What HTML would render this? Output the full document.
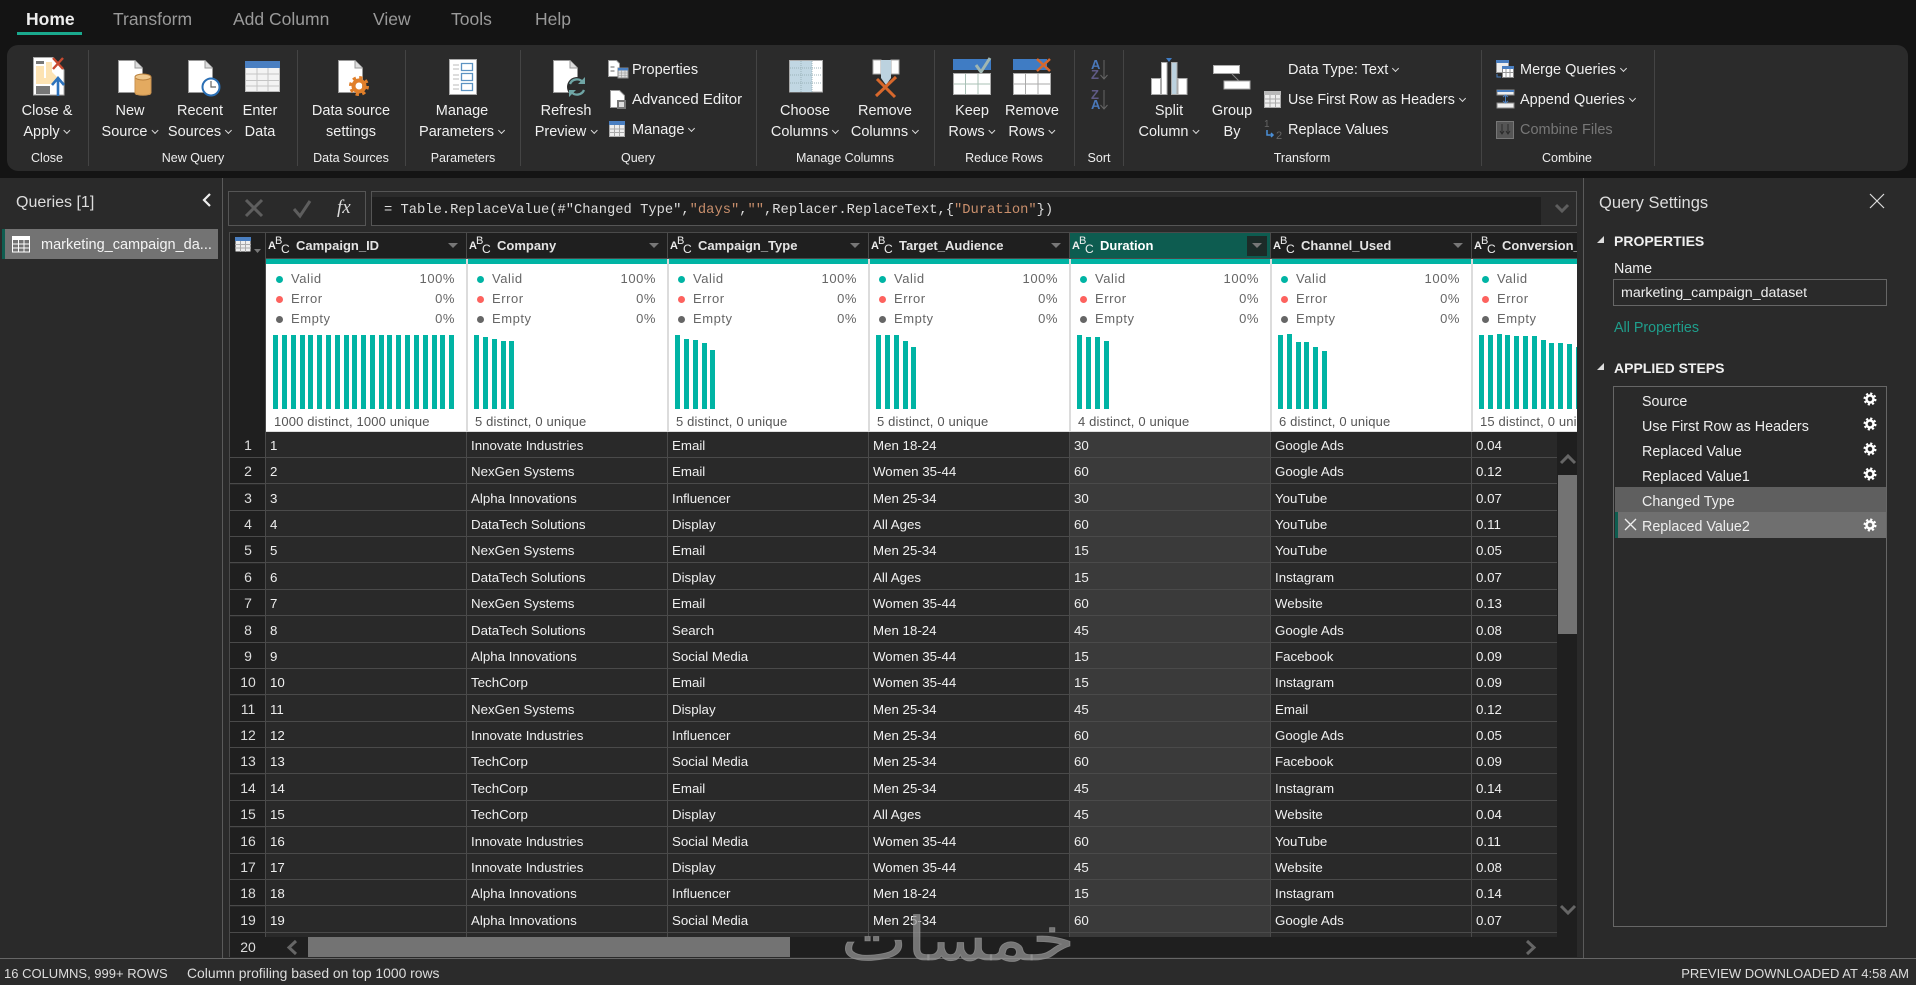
<!DOCTYPE html>
<html lang="en"><head><meta charset="utf-8"><title>Power Query Editor</title>
<style>
*{box-sizing:border-box;margin:0;padding:0}
html,body{width:1916px;height:985px;overflow:hidden;background:#2a2a2a}
body{position:relative;font-family:"Liberation Sans",Arial,sans-serif;color:#eee}
.a{position:absolute;white-space:nowrap}
.top{position:absolute;left:0;top:0;width:1916px;height:178px;background:#141414}
.tab{position:absolute;top:9px;font-size:17.5px;line-height:20px;color:#9a9a9a;white-space:nowrap}
.rib{position:absolute;left:7px;top:45px;width:1901px;height:126px;background:#2b2b2b;border-radius:11px}
.sep{position:absolute;top:50px;width:1px;height:116px;background:#444}
.l{position:absolute;transform:translateX(-50%);white-space:nowrap;font-size:14.5px;line-height:18px;color:#f0f0f0;margin-top:1px}
.g{position:absolute;transform:translateX(-50%);top:150px;white-space:nowrap;font-size:12.5px;line-height:15px;color:#eee;margin-top:1px}
.s{position:absolute;white-space:nowrap;font-size:14.5px;line-height:18px;color:#f0f0f0;margin-top:1px}
.v{display:inline-block;width:5px;height:5px;border:solid #ddd;border-width:0 1px 1px 0;transform:rotate(45deg);margin:0 1px 3px 5px}
.grid{position:absolute;left:0;top:0;width:1577px;height:957px;overflow:hidden}
.h{position:absolute;top:232px;height:27px;width:201px;background:#1f1f1f;border:solid #4a4a4a;border-width:1px 1px 1px 0}
.h b{position:absolute;left:30px;top:4px;font-size:13px;line-height:17px;color:#e4e4e4;white-space:nowrap}
.t{position:absolute;left:2px;top:7px;font-size:11px;line-height:13px;font-weight:bold;color:#eee;width:24px;height:18px}
.t u,.t s{position:absolute;text-decoration:none;font-weight:normal}
.t u{left:7px;top:-5px}.t s{left:13px;top:3px;font-size:12px}
.h i{position:absolute;left:182px;top:10px;width:0;height:0;border:solid transparent;border-width:5px 5px 0;border-top-color:#777}
.r{position:absolute;left:229px;width:1328px;height:26px;border-bottom:1px solid #4a4a4a;font-size:13.3px;line-height:27px;color:#f0f0f0}
.r b{position:absolute;left:0;top:0;width:37px;height:25px;background:#1f1f1f;font-weight:normal;text-align:center;font-size:14px;color:#ddd;padding-left:1px}
.r i{position:absolute;top:0;font-style:normal;white-space:nowrap}
.r i:nth-of-type(1){left:41px}.r i:nth-of-type(2){left:242px}.r i:nth-of-type(3){left:443px}.r i:nth-of-type(4){left:644px}.r i:nth-of-type(5){left:845px}.r i:nth-of-type(6){left:1046px}.r i:nth-of-type(7){left:1247px}
.p{position:absolute;top:264px;width:201px;height:167px;font-size:13px;line-height:16px;color:#666;letter-spacing:.55px}
.p span{position:absolute;white-space:nowrap}
.p em{position:absolute;left:10px;width:7px;height:7px;border-radius:50%}
.f{color:#555;letter-spacing:.15px;left:8px;top:150px}
.st{position:absolute;left:1642px;white-space:nowrap;font-size:14.3px;line-height:18px;color:#eee}
</style></head><body>

<div class="top"></div>
<div class="tab" style="left:26px;color:#eee;font-weight:bold">Home</div>
<div class="a" style="left:17px;top:32px;width:65px;height:3px;background:#1aa98e"></div>
<div class="tab" style="left:113px">Transform</div>
<div class="tab" style="left:233px">Add Column</div>
<div class="tab" style="left:373px">View</div>
<div class="tab" style="left:451px">Tools</div>
<div class="tab" style="left:535px">Help</div>

<div class="rib"></div>
<div class="sep" style="left:88px"></div><div class="sep" style="left:297px"></div><div class="sep" style="left:405px"></div><div class="sep" style="left:520px"></div><div class="sep" style="left:756px"></div><div class="sep" style="left:934px"></div><div class="sep" style="left:1074px"></div><div class="sep" style="left:1123px"></div><div class="sep" style="left:1481px"></div><div class="sep" style="left:1654px"></div>

<div class="l" style="left:47px;top:101px">Close &amp;</div><div class="l" style="left:47px;top:122px">Apply<span class="v"></span></div>
<div class="l" style="left:130px;top:101px">New</div><div class="l" style="left:130px;top:122px">Source<span class="v"></span></div>
<div class="l" style="left:200px;top:101px">Recent</div><div class="l" style="left:200px;top:122px">Sources<span class="v"></span></div>
<div class="l" style="left:260px;top:101px">Enter</div><div class="l" style="left:260px;top:122px">Data</div>
<div class="l" style="left:351px;top:101px">Data source</div><div class="l" style="left:351px;top:122px">settings</div>
<div class="l" style="left:462px;top:101px">Manage</div><div class="l" style="left:462px;top:122px">Parameters<span class="v"></span></div>
<div class="l" style="left:566px;top:101px">Refresh</div><div class="l" style="left:566px;top:122px">Preview<span class="v"></span></div>
<div class="l" style="left:805px;top:101px">Choose</div><div class="l" style="left:805px;top:122px">Columns<span class="v"></span></div>
<div class="l" style="left:885px;top:101px">Remove</div><div class="l" style="left:885px;top:122px">Columns<span class="v"></span></div>
<div class="l" style="left:972px;top:101px">Keep</div><div class="l" style="left:972px;top:122px">Rows<span class="v"></span></div>
<div class="l" style="left:1032px;top:101px">Remove</div><div class="l" style="left:1032px;top:122px">Rows<span class="v"></span></div>
<div class="l" style="left:1169px;top:101px">Split</div><div class="l" style="left:1169px;top:122px">Column<span class="v"></span></div>
<div class="l" style="left:1232px;top:101px">Group</div><div class="l" style="left:1232px;top:122px">By</div>

<div class="s" style="left:632px;top:60px">Properties</div>
<div class="s" style="left:632px;top:90px;font-size:15px">Advanced Editor</div>
<div class="s" style="left:632px;top:120px">Manage<span class="v"></span></div>
<div class="s" style="left:1288px;top:60px">Data Type: Text<span class="v"></span></div>
<div class="s" style="left:1288px;top:90px;font-size:14.3px">Use First Row as Headers<span class="v"></span></div>
<div class="s" style="left:1288px;top:120px">Replace Values</div>
<div class="s" style="left:1520px;top:60px">Merge Queries<span class="v"></span></div>
<div class="s" style="left:1520px;top:90px">Append Queries<span class="v"></span></div>
<div class="s" style="left:1520px;top:120px;color:#777">Combine Files</div>

<div class="g" style="left:47px">Close</div><div class="g" style="left:193px">New Query</div><div class="g" style="left:351px">Data Sources</div><div class="g" style="left:463px">Parameters</div><div class="g" style="left:638px">Query</div><div class="g" style="left:845px">Manage Columns</div><div class="g" style="left:1004px">Reduce Rows</div><div class="g" style="left:1099px">Sort</div><div class="g" style="left:1302px">Transform</div><div class="g" style="left:1567px">Combine</div>

<!-- ribbon icons -->
<svg class="a" style="left:0;top:0" width="1916" height="178" viewBox="0 0 1916 178">
<defs>
<symbol id="doc" viewBox="0 0 25 33" overflow="visible"><path d="M.5.5H17L24.5 8v24.5H.5z" fill="#fff" stroke="#999"/><path d="M17 .5V8h7.5" fill="#ddd" stroke="#999"/></symbol>
</defs>
<!-- close apply -->
<path d="M33.5 57.5H53L64 70v25H33.5z" fill="#fff" stroke="#aaa"/>
<rect x="36" y="61" width="8" height="3" fill="#777"/><path d="M36 66h8v12h9v6H36z" fill="#fde3b3"/><path d="M46 62h6v10l6 6-5 5h-7z" fill="#fde3b3"/>
<rect x="36" y="86" width="14" height="8" fill="#777"/>
<path d="M53 58l10 11M63 58L53 69" stroke="#c94a30" stroke-width="2.4" fill="none"/>
<path d="M52 85l6-7 6 7M58 79v17" stroke="#2d73bd" stroke-width="2.6" fill="none"/>
<!-- new source -->
<use href="#doc" x="118" y="60" width="25" height="33"/>
<rect x="135" y="77" width="16" height="18" rx="2" fill="#e3aa60"/><ellipse cx="143" cy="77" rx="8" ry="3" fill="#efc88e" stroke="#b9803c"/><path d="M135 77v16c2 3 14 3 16 0V77" fill="none" stroke="#c89250"/>
<!-- recent -->
<use href="#doc" x="188" y="60" width="25" height="33"/>
<circle cx="211" cy="87" r="8.5" fill="#fff" stroke="#2a6fb5" stroke-width="2"/><path d="M211 81v6h5" fill="none" stroke="#666" stroke-width="1.2"/>
<!-- enter data -->
<rect x="245.5" y="61.5" width="34" height="30" fill="#f3f3f3" stroke="#bbb"/><rect x="245" y="61" width="35" height="7" fill="#4a7fc1"/>
<path d="M257 68v23M268 68v23M246 74h33M246 80.500h33M246 86h33" stroke="#c5c5c5" fill="none"/>
<!-- data source -->
<use href="#doc" x="338" y="60" width="25" height="33"/>
<circle cx="359" cy="86" r="5.500" fill="none" stroke="#e07f2a" stroke-width="4"/><circle cx="359" cy="86" r="8.500" fill="none" stroke="#e07f2a" stroke-width="3" stroke-dasharray="3.300 3.370"/>
<!-- manage params -->
<rect x="449.500" y="59.500" width="27" height="35" fill="#fff" stroke="#aaa"/>
<path d="M453 65h6M453 69h6M453 75h6M453 79h6M453 85h6M453 89h6" stroke="#bbb" fill="none"/>
<path d="M461.500 63.500h11v7h-11zM461.500 73.500h11v7h-11zM461.500 83.500h11v7h-11z" fill="#fff" stroke="#5c93c2" stroke-width="1.300"/>
<!-- refresh -->
<use href="#doc" x="553" y="60" width="25" height="33"/>
<circle cx="577" cy="87" r="10" fill="#2b2b2b"/>
<path d="M570 84a7.500 7.500 0 0 1 13-1.500M584 90a7.500 7.500 0 0 1-13 1.500" fill="none" stroke="#6fa5a5" stroke-width="2.300"/><path d="M585 77v7h-7zM569 97v-7h7z" fill="#6fa5a5"/>
<!-- properties -->
<path d="M608.500 60.500h8l3 3v13h-11z" fill="#fff" stroke="#999"/><rect x="618" y="68" width="10" height="10" fill="#ddd" stroke="#888"/><rect x="618" y="68" width="10" height="2.500" fill="#4a7fc1"/><path d="M621.500 70v8M625 70v8M618 73h10M618 75.500h10" stroke="#999" stroke-width=".6"/><path d="M610.500 67h4M610.500 71h4" stroke="#666"/>
<!-- adv editor -->
<path d="M610.500 90.500h9l5 5v12h-14z" fill="#fff" stroke="#999"/><rect x="617" y="100" width="9" height="9" fill="#777"/><rect x="619" y="102" width="5" height="5" fill="#ddd"/>
<!-- manage -->
<rect x="609.500" y="121.500" width="15" height="15" fill="#eee" stroke="#aaa"/><rect x="609" y="121" width="16" height="4" fill="#4a7fc1"/><path d="M614.500 125v11M619.500 125v11M610 129h14M610 132.500h14" stroke="#aaa" fill="none"/>
<!-- choose columns -->
<rect x="789.500" y="60.500" width="33" height="31.500" fill="#fff" stroke="#aaa"/><rect x="790" y="61" width="22" height="31" fill="#c1d7e3"/>
<path d="M790 68h32M790 75h32M790 83h32M801 61v31M812 61v31" stroke="#9cb3b9" stroke-dasharray="1 1" fill="none"/>
<!-- remove columns -->
<rect x="873" y="60" width="8" height="14" fill="#fff" stroke="#aaa"/><rect x="891" y="60" width="8" height="14" fill="#fff" stroke="#aaa"/><path d="M881 60h10v18l-5 7-5-7z" fill="#bcd2df"/>
<path d="M876 96l20-19M877 79l18 18" stroke="#d8682c" stroke-width="3" fill="none"/>
<!-- keep rows -->
<rect x="953" y="59" width="38" height="11" fill="#3f7cc4"/><path d="M976 65l5 7 9-14" fill="none" stroke="#9fb6b2" stroke-width="3"/>
<rect x="953.500" y="73.500" width="37" height="21" fill="#fff" stroke="#aaa"/><path d="M965.500 74v20M978 74v20M954 84h36" stroke="#a8c0b6" fill="none"/>
<!-- remove rows -->
<rect x="1013" y="59" width="34" height="11" fill="#3f7cc4"/><path d="M1037 59l13 12M1050 59l-13 12" stroke="#d8682c" stroke-width="2.500" fill="none"/>
<rect x="1013.500" y="73.500" width="37" height="21" fill="#fff" stroke="#aaa"/><path d="M1025.500 74v20M1038 74v20M1014 84h36" stroke="#aaa" fill="none"/>
<!-- sort -->
<text x="1091" y="69" font-size="13" font-weight="bold" fill="#4a78b8" font-family="Liberation Sans">A</text><text x="1091" y="79" font-size="13" font-weight="bold" fill="#5f5a85" font-family="Liberation Sans">Z</text>
<path d="M1104 60v19M1100.500 75l3.500 4 3.500-4" stroke="#666" fill="none"/>
<text x="1091" y="99" font-size="13" font-weight="bold" fill="#5f5a85" font-family="Liberation Sans">Z</text><text x="1091" y="109" font-size="13" font-weight="bold" fill="#4a78b8" font-family="Liberation Sans">A</text>
<path d="M1104 90v19M1100.500 105l3.500 4 3.500-4" stroke="#666" fill="none"/>
<!-- split -->
<path d="M1166 58h6l-3 4z" fill="#3f7cc4"/><rect x="1151.500" y="78.500" width="9" height="16" fill="#fff" stroke="#aaa"/><rect x="1161.500" y="62.500" width="5.500" height="32" fill="#fff" stroke="#aaa"/><rect x="1171.500" y="62.500" width="5.500" height="32" fill="#bcd2df" stroke="#aaa"/><rect x="1178" y="78.500" width="9" height="16" fill="#fff" stroke="#aaa"/>
<!-- group -->
<rect x="1213.500" y="65.500" width="26" height="8" fill="#fff" stroke="#aaa"/><rect x="1224" y="81" width="26" height="8" fill="#fff" stroke="#aaa"/><path d="M1232 74l7 7" stroke="#888" fill="none"/>
<!-- first row -->
<rect x="1264.500" y="91.500" width="16" height="16" fill="#eee" stroke="#aaa"/><rect x="1264" y="91" width="17" height="4" fill="#b9b9b9"/><path d="M1270 95v12M1275.500 95v12M1265 99h15M1265 103h15" stroke="#aaa" fill="none"/>
<!-- replace -->
<text x="1264" y="127" font-size="10" fill="#666" font-family="Liberation Sans">1</text><text x="1276" y="139" font-size="11" fill="#666" font-family="Liberation Sans">2</text><path d="M1267 130v5h6M1271 133l2 2-2 2" stroke="#4a8fd8" stroke-width="1.500" fill="none"/>
<!-- merge -->
<rect x="1496.500" y="60.500" width="12" height="12" fill="#eee" stroke="#999"/><rect x="1496" y="60" width="13" height="3" fill="#4a7fc1"/><rect x="1502.500" y="66.500" width="11" height="11" fill="#fff" stroke="#888"/><rect x="1502" y="66" width="12" height="3" fill="#4a7fc1"/><path d="M1506 69v8M1510 69v8M1503 72.500h10" stroke="#999" fill="none"/><path d="M1497 74v3h4" stroke="#4a7fc1" fill="none"/>
<!-- append -->
<rect x="1497" y="90" width="17" height="5" fill="#eee" stroke="#888"/><rect x="1497" y="90" width="17" height="2" fill="#4a7fc1"/><rect x="1497" y="103" width="17" height="5" fill="#eee" stroke="#888"/><path d="M1505.500 95v8M1503 97l2.500-2 2.500 2M1503 101l2.500 2 2.500-2" stroke="#4a7fc1" fill="none"/>
<!-- combine -->
<rect x="1496.500" y="121.500" width="17" height="17" fill="#555" stroke="#777"/><path d="M1502 124v10M1500 131l2 3 2-3M1508 124v10M1506 131l2 3 2-3" stroke="#2b2b2b" fill="none"/>
</svg>

<!-- left panel -->
<div class="a" style="left:222px;top:178px;width:1px;height:780px;background:#5a5a5a"></div>
<div class="a" style="left:16px;top:193px;font-size:16px;line-height:20px;color:#ddd">Queries [1]</div>
<svg class="a" style="left:200px;top:192px" width="14" height="16"><path d="M10 2L4 8l6 6" fill="none" stroke="#eee" stroke-width="2.200"/></svg>
<div class="a" style="left:2px;top:229px;width:216px;height:30px;background:#737373;border-left:3px solid #0f5d50"></div>
<svg class="a" style="left:12px;top:236px" width="18" height="17"><path d="M.5.500h17v15.500H.5z" fill="none" stroke="#fff"/><rect width="18" height="4" fill="#fff"/><path d="M6.500 4v12M12 4v12M0 8h18M0 12h18" stroke="#fff" fill="none"/></svg>
<div class="a" style="left:41px;top:236px;font-size:14.500px;line-height:18px;color:#f4f4f4">marketing_campaign_da...</div>

<!-- formula bar -->
<div class="a" style="left:228px;top:191px;width:138px;height:35px;border:1px solid #555"></div>
<svg class="a" style="left:240px;top:195px" width="120" height="28"><path d="M6 5l16 16M22 5L6 21" stroke="#5e5e5e" stroke-width="3" fill="none"/><path d="M54 14l6 7 10-15" stroke="#5e5e5e" stroke-width="3" fill="none"/></svg>
<div class="a" style="left:337px;top:196px;font:italic 19px/24px 'Liberation Serif',serif;color:#ddd">fx</div>
<div class="a" style="left:371px;top:191px;width:1206px;height:35px;border:1px solid #555;background:#2b2b2b"></div>
<div class="a" style="left:372px;top:197px;width:1169px;height:28px;background:#1f1f1f"></div>
<div class="a" style="left:384px;top:201px;font:13.770px/19px 'Liberation Mono',monospace;color:#ddd">= Table.ReplaceValue(#"Changed Type",<span style="color:#c98f6c">"days"</span>,<span style="color:#c98f6c">""</span>,Replacer.ReplaceText,{<span style="color:#c98f6c">"Duration"</span>})</div>
<svg class="a" style="left:1554px;top:202px" width="16" height="14"><path d="M2 3l6 6 6-6" stroke="#5e5e5e" stroke-width="3" fill="none"/></svg>

<!-- grid -->
<div class="grid">
<div class="a" style="left:229px;top:232px;width:37px;height:200px;background:#1f1f1f;border:solid #4a4a4a;border-width:1px 1px 0 1px"></div>
<svg class="a" style="left:234px;top:236px" width="28" height="20"><rect x="1.500" y="1.500" width="15" height="14" fill="#eee"/><rect x="1" y="1" width="16" height="4" fill="#4a7fc1"/><path d="M6.500 5v11M11.500 5v11M1 8.500h16M1 12h16" stroke="#aaa" fill="none"/><path d="M20 13h7l-3.500 4z" fill="#777"/></svg>

<div class="h" style="left:266px"><span class="t">A<u>B</u><s>C</s></span><b>Campaign_ID</b><i></i></div>
<div class="h" style="left:467px"><span class="t">A<u>B</u><s>C</s></span><b>Company</b><i></i></div>
<div class="h" style="left:668px"><span class="t">A<u>B</u><s>C</s></span><b>Campaign_Type</b><i></i></div>
<div class="h" style="left:869px"><span class="t">A<u>B</u><s>C</s></span><b>Target_Audience</b><i></i></div>
<div class="h" style="left:1070px;background:#0d5c50"><span class="t">A<u>B</u><s>C</s></span><b style="color:#fff">Duration</b><span class="a" style="left:177px;top:3px;width:20px;height:20px;background:#1c2b28"></span><i></i></div>
<div class="h" style="left:1271px"><span class="t">A<u>B</u><s>C</s></span><b>Channel_Used</b><i></i></div>
<div class="h" style="left:1472px"><span class="t">A<u>B</u><s>C</s></span><b>Conversion_Rate</b></div>

<div class="a" style="left:266px;top:259px;width:1311px;height:5px;background:#00b4a4"></div>
<div class="a" style="left:266px;top:264px;width:1311px;height:168px;background:#fff;border-bottom:1px solid #ddd"></div>
<div class="a" style="left:465.500px;top:259px;width:2px;height:173px;background:#dcdcdc"></div>
<div class="a" style="left:666.500px;top:259px;width:2px;height:173px;background:#dcdcdc"></div>
<div class="a" style="left:867.500px;top:259px;width:2px;height:173px;background:#dcdcdc"></div>
<div class="a" style="left:1068.500px;top:259px;width:2px;height:173px;background:#dcdcdc"></div>
<div class="a" style="left:1269.500px;top:259px;width:2px;height:173px;background:#dcdcdc"></div>
<div class="a" style="left:1470.500px;top:259px;width:2px;height:173px;background:#dcdcdc"></div>

<div class="p" style="left:266px"><em style="top:12px;background:#00b4a4"></em><em style="top:32px;background:#fd625e"></em><em style="top:52px;background:#666"></em><span style="left:25px;top:7px">Valid</span><span style="left:25px;top:27px">Error</span><span style="left:25px;top:47px">Empty</span><span style="right:12px;top:7px">100%</span><span style="right:12px;top:27px">0%</span><span style="right:12px;top:47px">0%</span><span class="f">1000 distinct, 1000 unique</span></div>
<div class="p" style="left:467px"><em style="top:12px;background:#00b4a4"></em><em style="top:32px;background:#fd625e"></em><em style="top:52px;background:#666"></em><span style="left:25px;top:7px">Valid</span><span style="left:25px;top:27px">Error</span><span style="left:25px;top:47px">Empty</span><span style="right:12px;top:7px">100%</span><span style="right:12px;top:27px">0%</span><span style="right:12px;top:47px">0%</span><span class="f">5 distinct, 0 unique</span></div>
<div class="p" style="left:668px"><em style="top:12px;background:#00b4a4"></em><em style="top:32px;background:#fd625e"></em><em style="top:52px;background:#666"></em><span style="left:25px;top:7px">Valid</span><span style="left:25px;top:27px">Error</span><span style="left:25px;top:47px">Empty</span><span style="right:12px;top:7px">100%</span><span style="right:12px;top:27px">0%</span><span style="right:12px;top:47px">0%</span><span class="f">5 distinct, 0 unique</span></div>
<div class="p" style="left:869px"><em style="top:12px;background:#00b4a4"></em><em style="top:32px;background:#fd625e"></em><em style="top:52px;background:#666"></em><span style="left:25px;top:7px">Valid</span><span style="left:25px;top:27px">Error</span><span style="left:25px;top:47px">Empty</span><span style="right:12px;top:7px">100%</span><span style="right:12px;top:27px">0%</span><span style="right:12px;top:47px">0%</span><span class="f">5 distinct, 0 unique</span></div>
<div class="p" style="left:1070px"><em style="top:12px;background:#00b4a4"></em><em style="top:32px;background:#fd625e"></em><em style="top:52px;background:#666"></em><span style="left:25px;top:7px">Valid</span><span style="left:25px;top:27px">Error</span><span style="left:25px;top:47px">Empty</span><span style="right:12px;top:7px">100%</span><span style="right:12px;top:27px">0%</span><span style="right:12px;top:47px">0%</span><span class="f">4 distinct, 0 unique</span></div>
<div class="p" style="left:1271px"><em style="top:12px;background:#00b4a4"></em><em style="top:32px;background:#fd625e"></em><em style="top:52px;background:#666"></em><span style="left:25px;top:7px">Valid</span><span style="left:25px;top:27px">Error</span><span style="left:25px;top:47px">Empty</span><span style="right:12px;top:7px">100%</span><span style="right:12px;top:27px">0%</span><span style="right:12px;top:47px">0%</span><span class="f">6 distinct, 0 unique</span></div>
<div class="p" style="left:1472px"><em style="top:12px;background:#00b4a4"></em><em style="top:32px;background:#fd625e"></em><em style="top:52px;background:#666"></em><span style="left:25px;top:7px">Valid</span><span style="left:25px;top:27px">Error</span><span style="left:25px;top:47px">Empty</span><span class="f">15 distinct, 0 unique</span></div>

<svg class="a" style="left:0;top:0" width="1577" height="432" fill="#00b4a4">
<path d="M273 335h5v74h-5zM282 335h5v74h-5zM291 335h5v74h-5zM300 335h5v74h-5zM308 335h5v74h-5zM317 335h5v74h-5zM326 335h5v74h-5zM335 335h5v74h-5zM344 335h5v74h-5zM352 335h5v74h-5zM361 335h5v74h-5zM370 335h5v74h-5zM379 335h5v74h-5zM387 335h5v74h-5zM396 335h5v74h-5zM405 335h5v74h-5zM414 335h5v74h-5zM423 335h5v74h-5zM432 335h5v74h-5zM440 335h5v74h-5zM449 335h5v74h-5z"/>
<path d="M474 335h5v74h-5zM483 337h5v72h-5zM492 339h5v70h-5zM501 341h5v68h-5zM509 341h5v68h-5z"/>
<path d="M675 335h5v74h-5zM684 339h5v70h-5zM693 340h5v69h-5zM702 343h5v66h-5zM710 350h5v59h-5z"/>
<path d="M876 335h5v74h-5zM885 335h5v74h-5zM894 335h5v74h-5zM903 341h5v68h-5zM911 347h5v62h-5z"/>
<path d="M1077 335h5v74h-5zM1086 337h5v72h-5zM1095 337h5v72h-5zM1104 341h5v68h-5z"/>
<path d="M1278 335h5v74h-5zM1287 334h5v75h-5zM1296 342h5v67h-5zM1304 342h5v67h-5zM1313 347h5v62h-5zM1322 351h5v58h-5z"/>
<path d="M1479 335h5v74h-5zM1488 335h5v74h-5zM1497 334h5v75h-5zM1505 335h5v74h-5zM1514 336h5v73h-5zM1523 336h5v73h-5zM1532 336h5v73h-5zM1541 340h5v69h-5zM1549 343h5v66h-5zM1558 343h5v66h-5zM1567 344h5v65h-5zM1576 347h5v62h-5z"/>
</svg>

<div class="a" style="left:229px;top:432px;width:1328px;height:525px;background:#292929"></div>
<div class="a" style="left:1070px;top:432px;width:201px;height:525px;background:#3a3a3a"></div>

<div class="r" style="top:432px"><b>1</b><i>1</i><i>Innovate Industries</i><i>Email</i><i>Men 18-24</i><i>30</i><i>Google Ads</i><i>0.04</i></div>
<div class="r" style="top:458px"><b>2</b><i>2</i><i>NexGen Systems</i><i>Email</i><i>Women 35-44</i><i>60</i><i>Google Ads</i><i>0.12</i></div>
<div class="r" style="top:485px"><b>3</b><i>3</i><i>Alpha Innovations</i><i>Influencer</i><i>Men 25-34</i><i>30</i><i>YouTube</i><i>0.07</i></div>
<div class="r" style="top:511px"><b>4</b><i>4</i><i>DataTech Solutions</i><i>Display</i><i>All Ages</i><i>60</i><i>YouTube</i><i>0.11</i></div>
<div class="r" style="top:537px"><b>5</b><i>5</i><i>NexGen Systems</i><i>Email</i><i>Men 25-34</i><i>15</i><i>YouTube</i><i>0.05</i></div>
<div class="r" style="top:564px"><b>6</b><i>6</i><i>DataTech Solutions</i><i>Display</i><i>All Ages</i><i>15</i><i>Instagram</i><i>0.07</i></div>
<div class="r" style="top:590px"><b>7</b><i>7</i><i>NexGen Systems</i><i>Email</i><i>Women 35-44</i><i>60</i><i>Website</i><i>0.13</i></div>
<div class="r" style="top:617px"><b>8</b><i>8</i><i>DataTech Solutions</i><i>Search</i><i>Men 18-24</i><i>45</i><i>Google Ads</i><i>0.08</i></div>
<div class="r" style="top:643px"><b>9</b><i>9</i><i>Alpha Innovations</i><i>Social Media</i><i>Women 35-44</i><i>15</i><i>Facebook</i><i>0.09</i></div>
<div class="r" style="top:669px"><b>10</b><i>10</i><i>TechCorp</i><i>Email</i><i>Women 35-44</i><i>15</i><i>Instagram</i><i>0.09</i></div>
<div class="r" style="top:696px"><b>11</b><i>11</i><i>NexGen Systems</i><i>Display</i><i>Men 25-34</i><i>45</i><i>Email</i><i>0.12</i></div>
<div class="r" style="top:722px"><b>12</b><i>12</i><i>Innovate Industries</i><i>Influencer</i><i>Men 25-34</i><i>60</i><i>Google Ads</i><i>0.05</i></div>
<div class="r" style="top:748px"><b>13</b><i>13</i><i>TechCorp</i><i>Social Media</i><i>Men 25-34</i><i>60</i><i>Facebook</i><i>0.09</i></div>
<div class="r" style="top:775px"><b>14</b><i>14</i><i>TechCorp</i><i>Email</i><i>Men 25-34</i><i>45</i><i>Instagram</i><i>0.14</i></div>
<div class="r" style="top:801px"><b>15</b><i>15</i><i>TechCorp</i><i>Display</i><i>All Ages</i><i>45</i><i>Website</i><i>0.04</i></div>
<div class="r" style="top:828px"><b>16</b><i>16</i><i>Innovate Industries</i><i>Social Media</i><i>Women 35-44</i><i>60</i><i>YouTube</i><i>0.11</i></div>
<div class="r" style="top:854px"><b>17</b><i>17</i><i>Innovate Industries</i><i>Display</i><i>Women 35-44</i><i>45</i><i>Website</i><i>0.08</i></div>
<div class="r" style="top:880px"><b>18</b><i>18</i><i>Alpha Innovations</i><i>Influencer</i><i>Men 18-24</i><i>15</i><i>Instagram</i><i>0.14</i></div>
<div class="r" style="top:907px"><b>19</b><i>19</i><i>Alpha Innovations</i><i>Social Media</i><i>Men 25-34</i><i>60</i><i>Google Ads</i><i>0.07</i></div>

<div class="a" style="left:229px;top:933px;width:37px;height:24px;background:#1f1f1f;text-align:center;font-size:14px;line-height:28px;color:#ddd;padding-left:1px">20</div>
<div class="a" style="left:229px;top:432px;width:1px;height:525px;background:#4a4a4a"></div>
<div class="a" style="left:265px;top:432px;width:1px;height:505px;background:#4a4a4a"></div>
<div class="a" style="left:466px;top:432px;width:1px;height:505px;background:#4a4a4a"></div>
<div class="a" style="left:667px;top:432px;width:1px;height:505px;background:#4a4a4a"></div>
<div class="a" style="left:868px;top:432px;width:1px;height:505px;background:#4a4a4a"></div>
<div class="a" style="left:1069px;top:432px;width:1px;height:505px;background:#4a4a4a"></div>
<div class="a" style="left:1270px;top:432px;width:1px;height:505px;background:#4a4a4a"></div>
<div class="a" style="left:1471px;top:432px;width:1px;height:505px;background:#4a4a4a"></div>

<!-- scrollbars -->
<div class="a" style="left:1557px;top:432px;width:20px;height:525px;background:#1f1f1f"></div>
<svg class="a" style="left:1559px;top:452px" width="18" height="14"><path d="M2 11l7-7 7 7" stroke="#666" stroke-width="3" fill="none"/></svg>
<div class="a" style="left:1558px;top:475px;width:19px;height:159px;background:#737373"></div>
<svg class="a" style="left:1559px;top:903px" width="18" height="14"><path d="M2 3l7 7 7-7" stroke="#666" stroke-width="3" fill="none"/></svg>
<div class="a" style="left:266px;top:937px;width:1311px;height:20px;background:#1f1f1f"></div>
<svg class="a" style="left:285px;top:939px" width="14" height="17"><path d="M11 2L4 8.500l7 6.500" stroke="#666" stroke-width="3" fill="none"/></svg>
<div class="a" style="left:308px;top:937px;width:482px;height:20px;background:#737373"></div>
<svg class="a" style="left:1524px;top:939px" width="14" height="17"><path d="M3 2l7 6.500L3 15" stroke="#666" stroke-width="3" fill="none"/></svg>
</div>

<!-- right panel -->
<div class="a" style="left:1583px;top:178px;width:1px;height:780px;background:#5a5a5a"></div>
<div class="a" style="left:1599px;top:193px;font-size:16.500px;line-height:20px;color:#ddd">Query Settings</div>
<svg class="a" style="left:1869px;top:193px" width="16" height="16"><path d="M1 1l14 14M15 1L1 15" stroke="#ddd" stroke-width="1.200"/></svg>
<svg class="a" style="left:1596px;top:235px" width="10" height="10"><path d="M8 1v7H1z" fill="#ddd"/></svg>
<div class="a" style="left:1614px;top:232px;font-size:14px;line-height:18px;font-weight:bold;color:#f0f0f0">PROPERTIES</div>
<div class="a" style="left:1614px;top:260px;font-size:14.300px;line-height:18px;color:#eee">Name</div>
<div class="a" style="left:1613px;top:279px;width:274px;height:27px;border:1px solid #666"></div>
<div class="a" style="left:1621px;top:285px;font-size:14.200px;line-height:17px;color:#eee">marketing_campaign_dataset</div>
<div class="a" style="left:1614px;top:319px;font-size:14.300px;line-height:18px;color:#1f9e8c">All Properties</div>
<svg class="a" style="left:1596px;top:362px" width="10" height="10"><path d="M8 1v7H1z" fill="#ddd"/></svg>
<div class="a" style="left:1614px;top:359px;font-size:14px;line-height:18px;font-weight:bold;color:#f0f0f0">APPLIED STEPS</div>
<div class="a" style="left:1613px;top:386px;width:274px;height:541px;border:1px solid #666"></div>
<div class="a" style="left:1615px;top:487px;width:271px;height:25px;background:#5f5f5f"></div>
<div class="a" style="left:1615px;top:512px;width:271px;height:26px;background:#6f6f6f;border-left:3px solid #0e5d50"></div>
<div class="st" style="top:393px">Source</div>
<div class="st" style="top:418px">Use First Row as Headers</div>
<div class="st" style="top:443px">Replaced Value</div>
<div class="st" style="top:468px">Replaced Value1</div>
<div class="st" style="top:493px">Changed Type</div>
<div class="st" style="top:518px">Replaced Value2</div>
<svg class="a" style="left:0;top:0" width="1916" height="560" fill="none">
<g id="gg"><circle cx="1870" cy="399" r="3.500" stroke="#fff" stroke-width="2.500"/><circle cx="1870" cy="399" r="5.500" stroke="#fff" stroke-width="2" stroke-dasharray="2.200 2.120"/></g>
<use href="#gg" y="25"/><use href="#gg" y="50"/><use href="#gg" y="75"/><use href="#gg" y="126"/>
<path d="M1625 519l11 11M1636 519l-11 11" stroke="#eee" stroke-width="1.300"/>
</svg>

<!-- status bar -->
<div class="a" style="left:0;top:958px;width:1916px;height:27px;background:#2b2b2b;border-top:1px solid #666"></div>
<div class="a" style="left:4px;top:965px;font-size:13px;line-height:17px;color:#ddd">16 COLUMNS, 999+ ROWS</div>
<div class="a" style="left:187px;top:965px;font-size:13.900px;line-height:17px;color:#ddd">Column profiling based on top 1000 rows</div>
<div class="a" style="right:7px;top:965px;font-size:13px;line-height:17px;color:#ddd">PREVIEW DOWNLOADED AT 4:58 AM</div>

<!-- watermark -->
<div class="a" style="left:843px;top:900px;width:230px;text-align:center;font:60px/80px 'DejaVu Sans',sans-serif;color:rgba(150,150,150,.72);-webkit-text-stroke:.8px rgba(150,150,150,.72);transform:scaleX(1.17)" dir="rtl" lang="ar">خمسات</div>
</body></html>
